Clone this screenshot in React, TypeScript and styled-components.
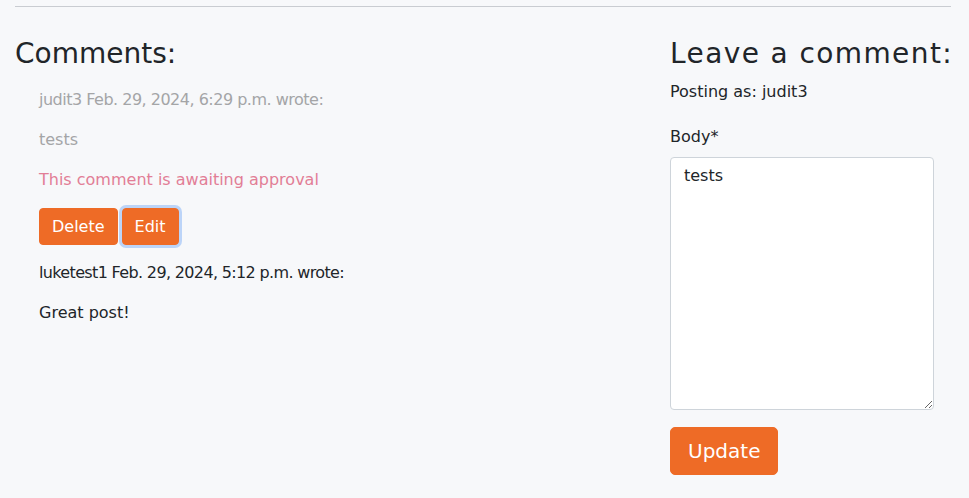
import React from "react";
import styled, { createGlobalStyle } from "styled-components";

const GlobalStyle = createGlobalStyle`
  html, body { margin: 0; padding: 0; }
  body {
    background: #f7f8fa;
    color: #212529;
    font-family: "DejaVu Sans", "Noto Sans", sans-serif;
    font-size: 16px;
    line-height: 24px;
  }
  * { box-sizing: border-box; }
`;

const Page = styled.div`
  padding: 0 18px 0 15px;
`;

const Rule = styled.hr`
  margin: 6px 0 0;
  border: 0;
  border-top: 1px solid #c9ccd1;
`;

const Columns = styled.div`
  display: grid;
  grid-template-columns: 655px 1fr;
`;

const Column = styled.section`
  display: flex;
  flex-direction: column;
  align-items: flex-start;
`;

const Heading = styled.h3<{ $spread?: number }>`
  margin: 30px 0 8px;
  font-size: 28px;
  line-height: 34px;
  font-weight: 400;
  white-space: nowrap;
  letter-spacing: ${(p) => p.$spread ?? 0}px;
  color: #212529;
`;

const CommentList = styled.div`
  padding: 9px 0 0 24px;
  display: flex;
  flex-direction: column;
`;

const Comment = styled.article`
  display: flex;
  flex-direction: column;
  align-items: flex-start;
`;

const Line = styled.p<{ $tone?: "faded" | "pending" | "normal"; $tight?: number }>`
  margin: 0 0 16px;
  font-size: 16px;
  line-height: 24px;
  white-space: nowrap;
  letter-spacing: ${(p) => p.$tight ?? 0}px;
  color: ${(p) =>
    p.$tone === "faded" ? "#a4a5a7" : p.$tone === "pending" ? "#e27e96" : "#212529"};
`;

const ButtonRow = styled.div`
  display: flex;
  gap: 4px;
  margin: 0 0 16px;
`;

const Button = styled.button<{ $focused?: boolean; $large?: boolean }>`
  font-family: inherit;
  background: #ee6b26;
  color: #ffffff;
  border: 1px solid #ee6b26;
  border-radius: ${(p) => (p.$large ? "5px" : "4px")};
  padding: ${(p) => (p.$large ? "8px 17px" : "6px 12px")};
  font-size: ${(p) => (p.$large ? "20px" : "16px")};
  line-height: ${(p) => (p.$large ? "30px" : "23px")};
  cursor: pointer;
  box-shadow: ${(p) => (p.$focused ? "0 0 0 3px #bcd4f8" : "none")};
`;

const Posting = styled.p`
  margin: 1px 0 21px;
  font-size: 16px;
  line-height: 24px;
`;

const Label = styled.label`
  display: block;
  font-size: 16px;
  line-height: 24px;
  margin-bottom: 8px;
`;

const TextArea = styled.textarea`
  display: block;
  width: 264px;
  height: 253px;
  padding: 6px 13px;
  font-family: inherit;
  font-size: 16px;
  line-height: 24px;
  color: #212529;
  background: #ffffff;
  border: 1px solid #ced4da;
  border-radius: 4px;
  resize: vertical;
  margin-bottom: 17px;
  outline: none;
`;

export default function App() {
  return (
    <>
      <GlobalStyle />
      <Page>
        <Rule />
        <Columns>
          <Column>
            <Heading>Comments:</Heading>
            <CommentList>
              <Comment>
                <Line $tone="faded" $tight={-0.5}>
                  judit3 Feb. 29, 2024, 6:29 p.m. wrote:
                </Line>
                <Line $tone="faded">tests</Line>
                <Line $tone="pending">This comment is awaiting approval</Line>
                <ButtonRow>
                  <Button>Delete</Button>
                  <Button $focused>Edit</Button>
                </ButtonRow>
              </Comment>
              <Comment>
                <Line $tight={-0.65}>luketest1 Feb. 29, 2024, 5:12 p.m. wrote:</Line>
                <Line>Great post!</Line>
              </Comment>
            </CommentList>
          </Column>
          <Column>
            <Heading $spread={1.4}>Leave a comment:</Heading>
            <Posting>Posting as: judit3</Posting>
            <Label htmlFor="body">Body*</Label>
            <TextArea id="body" defaultValue="tests" />
            <Button $large>Update</Button>
          </Column>
        </Columns>
      </Page>
    </>
  );
}
